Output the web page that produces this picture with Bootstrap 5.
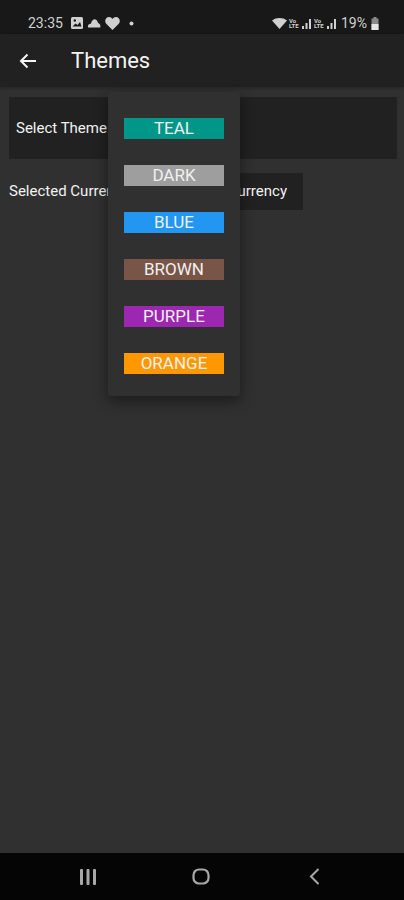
<!DOCTYPE html>
<html lang="en">
<head>
    <meta charset="UTF-8" />
    <meta name="viewport" content="width=device-width, initial-scale=1" />
    <title>Themes</title>
    <link rel="stylesheet" href="https://cdn.jsdelivr.net/npm/bootstrap@5.3.0/dist/css/bootstrap.min.css" />
    <style>
        html, body { height: 100%; }
        body {
          background-color: #303030;
          font-family: Roboto, "Liberation Sans", sans-serif;
          color: #f2f2f2;
        }
        .phone { height: 900px; position: relative; overflow: hidden; }
        .status-row { height: 34px; background: #181818; padding: 15px 25px 0 28px; font-size: 14px; line-height: 16px; color: #d0d0d0; }
        .status-row svg { display: block; }
        .tiny-net { font-size: 6px; line-height: 5px; font-weight: 700; width: 13px; margin-left: 2px; }
        .status-dot { margin-left: 5px; }
        .app-row { height: 53px; background: #212121; padding-left: 19px; box-shadow: 0 1px 3px rgba(0, 0, 0, .25); }
        .app-title { font-size: 22px; font-weight: 400; margin-left: 34px; }
        .page-body { padding: 10px 7px 0 9px; }
        .select-panel { height: 62px; background: #212121; padding-left: 7px; font-size: 15px; }
        .currency-row { margin-top: 14px; font-size: 15px; }
        .currency-label { width: 124px; white-space: nowrap; }
        .currency-btn { height: 37px; width: 132px; margin-left: 38px; background: #212121; color: #f2f2f2; padding: 0 16px 0 0; text-align: right; font-size: 15px; border: 0; border-radius: 0; white-space: nowrap; }
        .theme-menu {
          position: absolute; left: 108px; top: 92px; width: 132px; height: 304px;
          background: #303030; padding-top: 25.5px; border-radius: 4px;
          box-shadow: 0 5px 14px rgba(0, 0, 0, .45);
        }
        .theme-chip { width: 100px; height: 21px; line-height: 20px; margin: 0 auto 26.2px; text-align: center; font-size: 17px; color: #f0f0f0; }
        .chip-teal { background: #009688; }
        .chip-dark { background: #9e9e9e; }
        .chip-blue { background: #2196f3; }
        .chip-brown { background: #795548; }
        .chip-purple { background: #9c27b0; }
        .chip-orange { background: #ff9800; }
        .nav-row { height: 47px; background: #050505; padding-left: 79px; }
        .nav-home { margin-left: 95px; }
        .nav-back { margin-left: 99px; }
    </style>
</head>
<body>
<div class="phone d-flex flex-column">

    <!-- Status bar -->
    <div class="status-row d-flex align-items-start justify-content-between flex-shrink-0">
        <div class="d-flex align-items-center gap-1">
            <span>23:35</span>
            <svg class="ms-1" width="12" height="12" viewBox="0 0 12 12"><rect width="12" height="12" rx="1.500" fill="#d0d0d0"/><path d="M1.500 9.500l3-3 2 1.500 2.500-3 1.500 4.500z" fill="#181818"/><circle cx="3.800" cy="3.500" r="1.200" fill="#181818"/></svg>
            <svg width="14" height="9" viewBox="0 0 15 10"><path d="M1 9.500c-1-3 1-4.500 3-4.300C5 2 7-.2 9 .5c2 .5 2.500 2.500 3 4 2 .5 3 2.500 2.500 5z" fill="#d0d0d0"/></svg>
            <svg width="15" height="13" viewBox="0 0 15 13"><path d="M7.500 13L1 6.500C-1 3.500 1 0 4 0c1.500 0 2.800.8 3.500 2C8.200.8 9.500 0 11 0c3 0 5 3.500 3 6.500z" fill="#d0d0d0"/></svg>
            <svg class="status-dot" width="5" height="5" viewBox="0 0 5 5"><circle cx="2.500" cy="2.500" r="2" fill="#d0d0d0"/></svg>
        </div>
        <div class="d-flex align-items-center">
            <svg width="15" height="11" viewBox="0 0 15 11"><path d="M0 2.500C4-.8 11-.8 15 2.500L7.500 11z" fill="#d0d0d0"/></svg>
            <span class="tiny-net">Vo LTE</span>
            <svg width="10" height="11" viewBox="0 0 10 11"><path d="M0 11h2V8H0zM3.500 11h2V5h-2zM7 11h2V1H7z" fill="#d0d0d0"/></svg>
            <span class="tiny-net">Vo LTE</span>
            <svg width="10" height="11" viewBox="0 0 10 11"><path d="M0 11h2V8H0zM3.500 11h2V5h-2zM7 11h2V1H7z" fill="#d0d0d0"/></svg>
            <span class="ms-1">19%</span>
            <svg class="ms-1" width="8" height="13" viewBox="0 0 8 13"><path d="M2.500 0h3v1.500H7.500V13H.5V1.500h2z" fill="#8a8a8a"/><rect x=".5" y="7" width="7" height="6" fill="#e6e6e6"/></svg>
        </div>
    </div>

    <!-- App bar -->
    <div class="app-row d-flex align-items-center flex-shrink-0">
        <svg width="18" height="16" viewBox="0 0 18 16" fill="none" stroke="#f5f5f5" stroke-width="2"><path d="M17 8H2M8.500 1.500L2 8l6.500 6.500"/></svg>
        <span class="app-title">Themes</span>
    </div>

    <!-- Content -->
    <div class="page-body flex-grow-1">
        <div class="select-panel d-flex align-items-center">Select Theme</div>
        <div class="currency-row d-flex align-items-center">
            <span class="currency-label">Selected Currency</span>
            <button type="button" class="btn currency-btn">Select Currency</button>
        </div>
    </div>

    <!-- Theme popup -->
    <div class="theme-menu">
        <div class="theme-chip chip-teal">TEAL</div>
        <div class="theme-chip chip-dark">DARK</div>
        <div class="theme-chip chip-blue">BLUE</div>
        <div class="theme-chip chip-brown">BROWN</div>
        <div class="theme-chip chip-purple">PURPLE</div>
        <div class="theme-chip chip-orange">ORANGE</div>
    </div>

    <!-- Nav bar -->
    <div class="nav-row d-flex align-items-center flex-shrink-0">
        <svg width="18" height="16" viewBox="0 0 18 16" fill="#a8a8a8"><rect x="1" width="3" height="16" rx="1"/><rect x="7.500" width="3" height="16" rx="1"/><rect x="14" width="3" height="16" rx="1"/></svg>
        <svg class="nav-home" width="18" height="17" viewBox="0 0 18 17" fill="none" stroke="#a8a8a8" stroke-width="2.200"><rect x="1.500" y="1.500" width="15" height="14" rx="5.500"/></svg>
        <svg class="nav-back" width="11" height="17" viewBox="0 0 11 17" fill="none" stroke="#a8a8a8" stroke-width="2"><path d="M9.500 1L2 8.500 9.500 16"/></svg>
    </div>
</div>
<script src="https://cdn.jsdelivr.net/npm/bootstrap@5.3.0/dist/js/bootstrap.bundle.min.js"></script>
</body>
</html>
